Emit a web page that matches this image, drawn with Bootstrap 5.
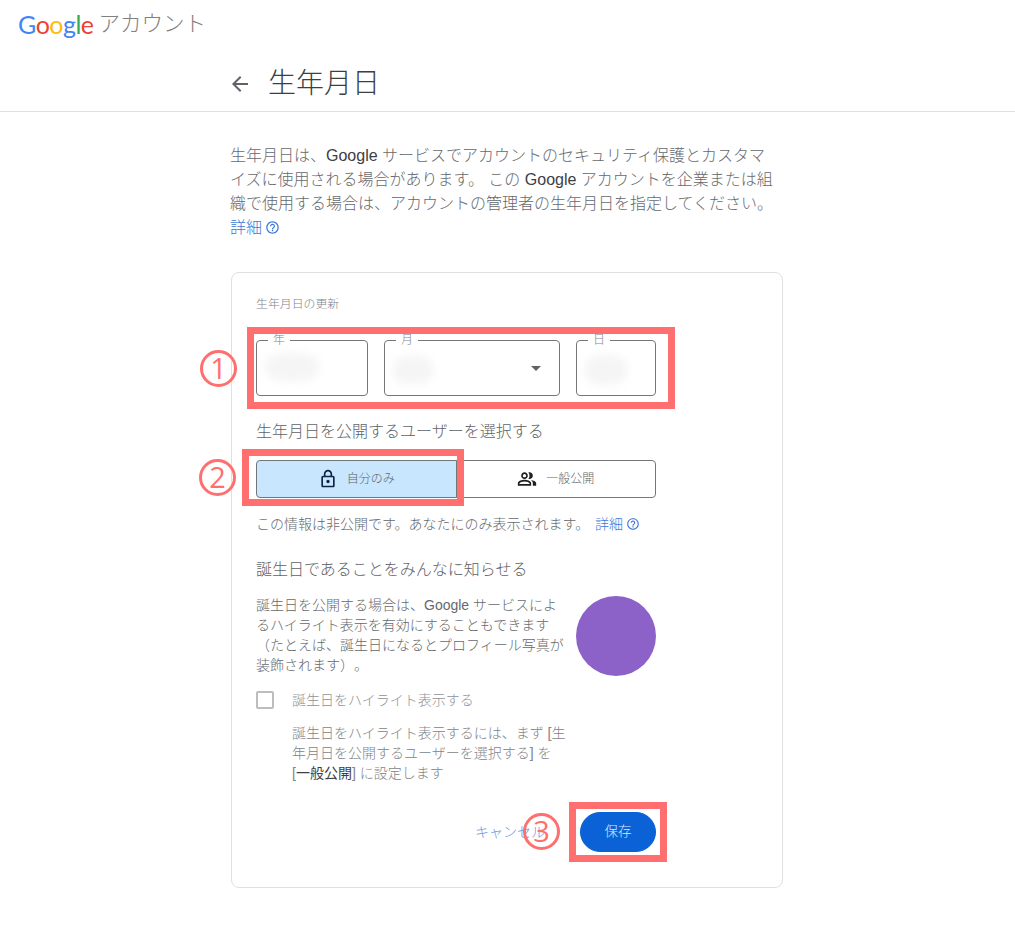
<!DOCTYPE html>
<html lang="ja">
<head>
<meta charset="utf-8">
<title>生年月日</title>
<link rel="stylesheet" href="https://cdn.jsdelivr.net/npm/bootstrap@5.3.0/dist/css/bootstrap.min.css">
<style>
body{font-family:"Liberation Sans","Noto Sans CJK JP",sans-serif;color:#66696d;background:#fff;font-size:14px;line-height:20px;font-weight:300;text-spacing-trim:space-all;}
a{text-decoration:none;color:#3b78d8;}
.ga-top{height:54px;padding:0 18px 6px;}
.ga-brand{font-family:"Lato","Noto Sans CJK JP",sans-serif;font-size:25px;letter-spacing:-.5px;font-weight:400;line-height:30px;}
.ga-product{font-size:21.5px;font-weight:300;color:#808080;margin-left:5px;line-height:30px;}
.ga-b{color:#4285f4}.ga-r{color:#ea4335}.ga-y{color:#fbbc05}.ga-g{color:#34a853}
.ga-titlebar{height:58px;border-bottom:1px solid #e0e0e0;}
.ga-wrap{width:552px;margin-left:231px;}
.ga-titleinner{height:57px;padding-top:3px;}
.ga-back{margin-left:-3px;flex:none;}
.ga-title{font-size:28px;font-weight:300;color:#3c4043;line-height:36px;margin:0 0 0 16px;}
.ga-intro{font-size:16px;line-height:24px;margin:32px 0 32px;margin-left:-1px;}
.ga-intro b,.ga-dark{font-weight:400;color:#3c4043;}
.ga-card{border:1px solid #e0e0e0;border-radius:8px;padding:24px;height:616px;}
.ga-inner{width:400px;}
.ga-cardtitle{font-size:11.9px;line-height:14px;margin-bottom:29px;color:#80848a;}
.ga-fields{gap:16px;height:56px;position:relative;}
.ga-field{position:relative;height:56px;border:1px solid #747775;border-radius:4px;}
.ga-fy{width:112px}.ga-fm{width:176px}.ga-fd{width:80px}
.ga-legend{position:absolute;top:-9px;left:11px;background:#fff;padding:0 5px;font-size:12px;line-height:16px;color:#80868b;}
.ga-blob{position:absolute;background:#f5f5f5;border-radius:40%;filter:blur(4px);}
.ga-by{left:8px;top:12px;width:54px;height:28px;}
.ga-bm{left:8px;top:15px;width:40px;height:28px;}
.ga-bd{left:8px;top:14px;width:42px;height:30px;}
.ga-caret{position:absolute;right:18px;top:25px;width:0;height:0;border-left:5px solid transparent;border-right:5px solid transparent;border-top:5px solid #5f6368;}
.ga-h{font-size:16px;line-height:24px;margin:0;font-weight:300;color:#5f6368;}
.ga-h1{margin-top:24px;}
.ga-togglewrap{position:relative;margin-top:16px;height:38px;}
.ga-toggle{height:38px;}
.ga-toggle .btn{flex:1 1 50%;width:200px;height:38px;font-size:12px;line-height:16px;font-weight:300;color:#5f6368;border-color:#747775;border-radius:4px;padding:0;display:flex;align-items:center;justify-content:center;gap:9px;background:#fff;}
.ga-toggle .btn.active{background:#c8e6fd;color:#5f6368;border-color:#747775;}
.ga-help{margin:16px 0 0;}
.ga-help a{margin-left:2px;}
.ga-h2{margin-top:24px;}
.ga-share{margin-top:14px;gap:12px;}
.ga-sharetext{width:308px;flex:none;margin-top:-1px;}
.ga-avatar{width:80px;height:80px;border-radius:50%;background:#8c62c8;flex:none;}
.ga-check{margin-top:14px;gap:18px;color:#8f9296;}
.ga-check .form-check-input{width:18px;height:18px;margin:0;border:2px solid #bdbdbd;border-radius:2px;flex:none;opacity:1;background-color:#fff;}
.ga-note{margin:13px 0 0 36px;width:280px;color:#80848a;}
.ga-actions{margin-top:29px;position:relative;gap:0;}
.ga-cancel{font-size:14px;color:#6d96e2;margin-right:35px;}
.ga-save{width:76px;height:40px;padding:0;border-radius:20px;background:#0b62d6;border-color:#0b62d6;font-size:13.5px;font-weight:300;color:#dce8fa;position:relative;}
.ga-annot{position:absolute;border:7px solid #ff6f6f;pointer-events:none;}
.ga-a1{left:-9px;right:-19px;top:-13px;bottom:-13px;}
.ga-a2{left:-14px;top:-11px;width:222px;height:57px;}
.ga-a3{right:-11px;top:-10px;width:98px;height:60px;}
.ga-num{position:absolute;width:37px;height:37px;border:3px solid #ff6f6f;border-radius:50%;color:#ff6f6f;font-family:"Open Sans",sans-serif;font-weight:400;font-size:29px;line-height:30px;text-align:center;background:transparent;}
.ga-n1{left:-56px;top:10px;}
.ga-n2{left:-57px;top:-1px;}
.ga-n3{right:96px;top:1px;}
.ga-q{vertical-align:-2px;margin-left:3px;}
</style>
</head>
<body>
<svg width="0" height="0" class="position-absolute"><symbol id="ga-help" viewBox="0 0 24 24"><path d="M11 18h2v-2h-2v2zm1-16C6.48 2 2 6.48 2 12s4.480 10 10 10 10-4.48 10-10S17.52 2 12 2zm0 18c-4.41 0-8-3.59-8-8s3.59-8 8-8 8 3.59 8 8-3.59 8-8 8zm0-14c-2.21 0-4 1.790-4 4h2c0-1.100.9-2 2-2s2 .9 2 2c0 2-3 1.750-3 5h2c0-2.250 3-2.500 3-5 0-2.210-1.790-4-4-4z" fill="#3b78d8"/></symbol></svg>

<header class="ga-top d-flex align-items-center">
  <span class="ga-brand"><span class="ga-b">G</span><span class="ga-r">o</span><span class="ga-y">o</span><span class="ga-b">g</span><span class="ga-g">l</span><span class="ga-r">e</span></span>
  <span class="ga-product">アカウント</span>
</header>

<div class="ga-titlebar">
  <div class="ga-wrap ga-titleinner d-flex align-items-center">
    <svg class="ga-back" width="24" height="24" viewBox="0 0 24 24"><path d="M20 11H7.830l5.590-5.590L12 4l-8 8 8 8 1.410-1.410L7.830 13H20v-2z" fill="#5f6368"/></svg>
    <h1 class="ga-title">生年月日</h1>
  </div>
</div>

<main class="ga-wrap">
  <p class="ga-intro">生年月日は、<b>Google</b> サービスでアカウントのセキュリティ保護とカスタマ<br>イズに使用される場合があります。 この <b>Google</b> アカウントを企業または組<br>織で使用する場合は、アカウントの管理者の生年月日を指定してください。<br><a href="#">詳細</a><svg class="ga-q" width="15" height="15"><use href="#ga-help"/></svg></p>

  <section class="card ga-card">
    <div class="ga-inner">
      <div class="ga-cardtitle">生年月日の更新</div>

      <div class="ga-fields d-flex">
        <div class="ga-field ga-fy"><span class="ga-legend">年</span><span class="ga-blob ga-by"></span></div>
        <div class="ga-field ga-fm"><span class="ga-legend">月</span><span class="ga-blob ga-bm"></span><span class="ga-caret"></span></div>
        <div class="ga-field ga-fd"><span class="ga-legend">日</span><span class="ga-blob ga-bd"></span></div>
        <span class="ga-annot ga-a1"></span>
        <span class="ga-num ga-n1">1</span>
      </div>

      <h2 class="ga-h ga-h1">生年月日を公開するユーザーを選択する</h2>

      <div class="ga-togglewrap">
        <div class="ga-toggle btn-group d-flex" role="group">
          <button type="button" class="btn active">
            <svg width="20" height="20" viewBox="0 0 24 24"><path d="M18 8h-1V6c0-2.760-2.240-5-5-5S7 3.240 7 6v2H6c-1.100 0-2 .9-2 2v10c0 1.100.9 2 2 2h12c1.100 0 2-.9 2-2V10c0-1.100-.9-2-2-2zM9 6c0-1.660 1.340-3 3-3s3 1.340 3 3v2H9V6zm9 14H6V10h12v10zm-6-3c1.100 0 2-.9 2-2s-.9-2-2-2-2 .9-2 2 .9 2 2 2z" fill="#0b2545"/></svg>
            自分のみ
          </button>
          <button type="button" class="btn">
            <svg width="20" height="20" viewBox="0 0 24 24"><path d="M16.670 13.130C18.040 14.060 19 15.320 19 17v3h4v-3c0-2.180-3.570-3.470-6.330-3.870z M15 12c2.210 0 4-1.790 4-4s-1.790-4-4-4c-.47 0-.91.1-1.330.24C14.500 5.270 15 6.580 15 8s-.5 2.730-1.330 3.760c.42.14.86.24 1.330.24z M9 12c2.210 0 4-1.790 4-4s-1.790-4-4-4-4 1.790-4 4 1.790 4 4 4zm0-6c1.100 0 2 .9 2 2s-.9 2-2 2-2-.9-2-2 .9-2 2-2z M9 13c-2.670 0-8 1.340-8 4v3h16v-3c0-2.660-5.330-4-8-4zm6 5H3v-.99C3.200 16.290 6.300 15 9 15s5.800 1.290 6 2v1z" fill="#1f1f1f"/></svg>
            一般公開
          </button>
        </div>
        <span class="ga-annot ga-a2"></span>
        <span class="ga-num ga-n2">2</span>
      </div>

      <p class="ga-help">この情報は非公開です。あなたにのみ表示されます。 <a href="#">詳細</a><svg class="ga-q" width="14" height="14"><use href="#ga-help"/></svg></p>

      <h2 class="ga-h ga-h2">誕生日であることをみんなに知らせる</h2>

      <div class="ga-share d-flex align-items-start">
        <div class="ga-sharetext">誕生日を公開する場合は、Google サービスによ<br>るハイライト表示を有効にすることもできます<br>（たとえば、誕生日になるとプロフィール写真が<br>装飾されます）。</div>
        <div class="ga-avatar"></div>
      </div>

      <div class="ga-check d-flex align-items-center">
        <input class="form-check-input" type="checkbox" id="ga-hl" disabled>
        <label for="ga-hl">誕生日をハイライト表示する</label>
      </div>
      <div class="ga-note">誕生日をハイライト表示するには、まず [生<br>年月日を公開するユーザーを選択する] を<br>[<span class="ga-dark">一般公開</span>] に設定します</div>

      <div class="ga-actions d-flex justify-content-end align-items-center">
        <a href="#" class="ga-cancel">キャンセル</a>
        <button type="button" class="btn btn-primary ga-save">保存</button>
        <span class="ga-annot ga-a3"></span>
        <span class="ga-num ga-n3">3</span>
      </div>
    </div>
  </section>
</main>
<script src="https://cdn.jsdelivr.net/npm/bootstrap@5.3.0/dist/js/bootstrap.bundle.min.js"></script>
</body>
</html>
